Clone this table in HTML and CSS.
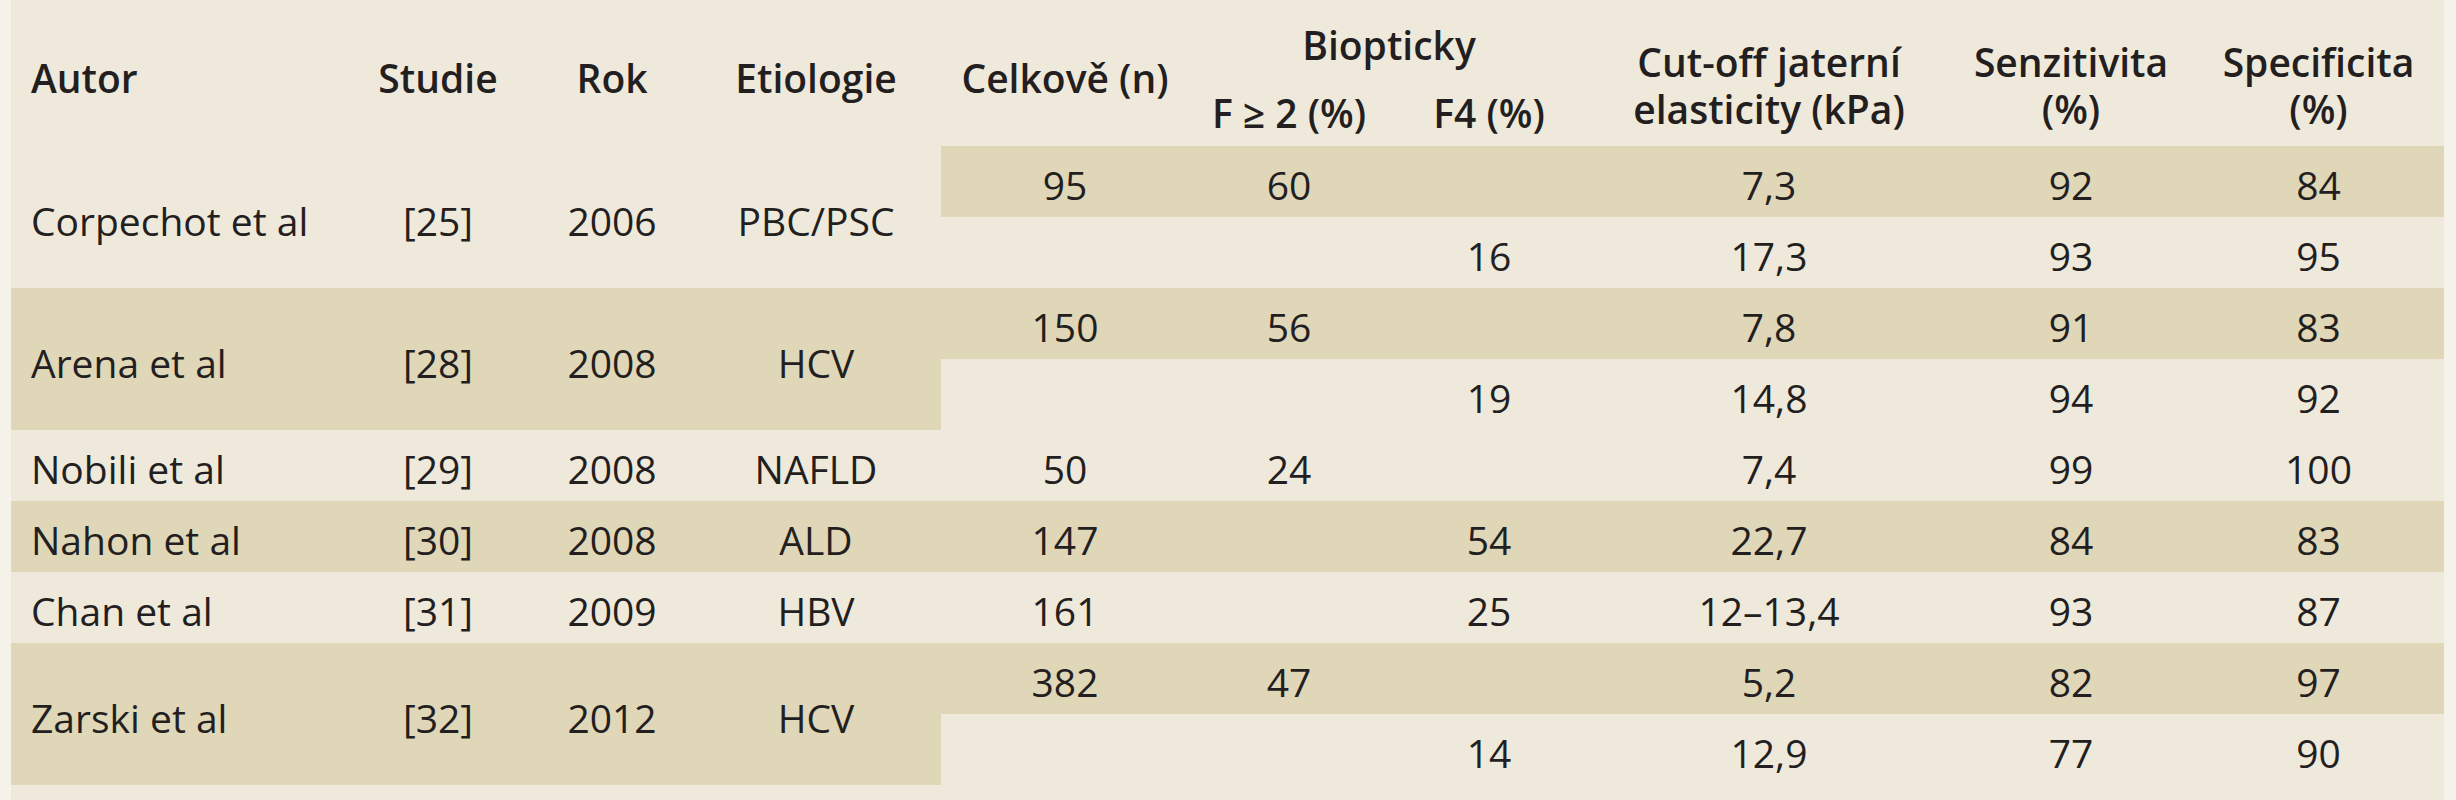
FILE: index.html
```html
<!DOCTYPE html>
<html lang="cs">
<head>
<meta charset="utf-8">
<title>Tranzientní elastografie – přehled studií</title>
<link rel="stylesheet" href="styles.css">
</head>
<body>
<div class="sheet">
<table class="data">
  <colgroup>
    <col class="c-autor">
    <col class="c-studie">
    <col class="c-rok">
    <col class="c-etio">
    <col class="c-celk">
    <col class="c-f2">
    <col class="c-f4">
    <col class="c-cut">
    <col class="c-senz">
    <col class="c-spec">
  </colgroup>
  <thead>
    <tr class="h-r1">
      <th rowspan="2" class="span author">Autor</th>
      <th rowspan="2" class="span">Studie</th>
      <th rowspan="2" class="span">Rok</th>
      <th rowspan="2" class="span">Etiologie</th>
      <th rowspan="2" class="span">Celkově (n)</th>
      <th colspan="2" class="group">Biopticky</th>
      <th rowspan="2" class="two"><span class="ln">Cut-off jaterní</span><span class="ln">elasticity (kPa)</span></th>
      <th rowspan="2" class="two"><span class="ln">Senzitivita</span><span class="ln">(%)</span></th>
      <th rowspan="2" class="two"><span class="ln">Specificita</span><span class="ln">(%)</span></th>
    </tr>
    <tr class="h-r2">
      <th>F ≥ 2 (%)</th>
      <th>F4 (%)</th>
    </tr>
  </thead>
  <tbody>
    <tr>
      <td rowspan="2" class="author">Corpechot et al</td>
      <td rowspan="2">[25]</td>
      <td rowspan="2">2006</td>
      <td rowspan="2">PBC/PSC</td>
      <td class="band">95</td>
      <td class="band">60</td>
      <td class="band"></td>
      <td class="band">7,3</td>
      <td class="band">92</td>
      <td class="band">84</td>
    </tr>
    <tr>
      <td></td>
      <td></td>
      <td>16</td>
      <td>17,3</td>
      <td>93</td>
      <td>95</td>
    </tr>
    <tr class="band">
      <td rowspan="2" class="author">Arena et al</td>
      <td rowspan="2">[28]</td>
      <td rowspan="2">2008</td>
      <td rowspan="2">HCV</td>
      <td>150</td>
      <td>56</td>
      <td></td>
      <td>7,8</td>
      <td>91</td>
      <td>83</td>
    </tr>
    <tr>
      <td></td>
      <td></td>
      <td>19</td>
      <td>14,8</td>
      <td>94</td>
      <td>92</td>
    </tr>
    <tr>
      <td class="author">Nobili et al</td>
      <td>[29]</td>
      <td>2008</td>
      <td>NAFLD</td>
      <td>50</td>
      <td>24</td>
      <td></td>
      <td>7,4</td>
      <td>99</td>
      <td>100</td>
    </tr>
    <tr class="band">
      <td class="author">Nahon et al</td>
      <td>[30]</td>
      <td>2008</td>
      <td>ALD</td>
      <td>147</td>
      <td></td>
      <td>54</td>
      <td>22,7</td>
      <td>84</td>
      <td>83</td>
    </tr>
    <tr>
      <td class="author">Chan et al</td>
      <td>[31]</td>
      <td>2009</td>
      <td>HBV</td>
      <td>161</td>
      <td></td>
      <td>25</td>
      <td>12–13,4</td>
      <td>93</td>
      <td>87</td>
    </tr>
    <tr class="band">
      <td rowspan="2" class="author">Zarski et al</td>
      <td rowspan="2">[32]</td>
      <td rowspan="2">2012</td>
      <td rowspan="2">HCV</td>
      <td>382</td>
      <td>47</td>
      <td></td>
      <td>5,2</td>
      <td>82</td>
      <td>97</td>
    </tr>
    <tr>
      <td></td>
      <td></td>
      <td>14</td>
      <td>12,9</td>
      <td>77</td>
      <td>90</td>
    </tr>
  </tbody>
</table>
</div>
</body>
</html>
```

FILE: styles.css
```css
html, body {
  margin: 0;
  padding: 0;
}

body {
  background: #F5F2EA;
}

.sheet {
  margin-left: 11px;
  width: 2433px;
  min-height: 800px;
  background: #EFE9DC;
}

.data {
  table-layout: fixed;
  width: 2433px;
  border-collapse: collapse;
  border-spacing: 0;
  font-family: "Open Sans", "Noto Sans", sans-serif;
  font-size: 39px;
  color: #231F20;
}

.c-autor { width: 332px; }
.c-studie { width: 190px; }
.c-rok { width: 158px; }
.c-etio { width: 250px; }
.c-celk { width: 248px; }
.c-f2 { width: 200px; }
.c-f4 { width: 200px; }
.c-cut { width: 360px; }
.c-senz { width: 244px; }
.c-spec { width: 251px; }

.data th {
  font-weight: 600;
  line-height: 44px;
  padding: 0;
  vertical-align: top;
  text-align: center;
  white-space: nowrap;
}

.h-r1 { height: 80px; }
.h-r2 { height: 66px; }

.data th.span { padding-top: 56px; }
.data th.group { padding-top: 23px; }
.h-r2 th { padding-top: 11px; }

.data th.two {
  padding-top: 40px;
  line-height: 44px;
}

.data th.two .ln {
  display: block;
}

.data th.two .ln + .ln {
  margin-top: 3px;
}

.data tbody tr { height: 71px; }

.data td {
  font-weight: 400;
  line-height: 47px;
  padding: 6px 0 0 0;
  vertical-align: middle;
  text-align: center;
  white-space: nowrap;
}

.data .author {
  text-align: left;
  padding-left: 20px;
}

.band {
  background: #E0D6B8;
}
```
